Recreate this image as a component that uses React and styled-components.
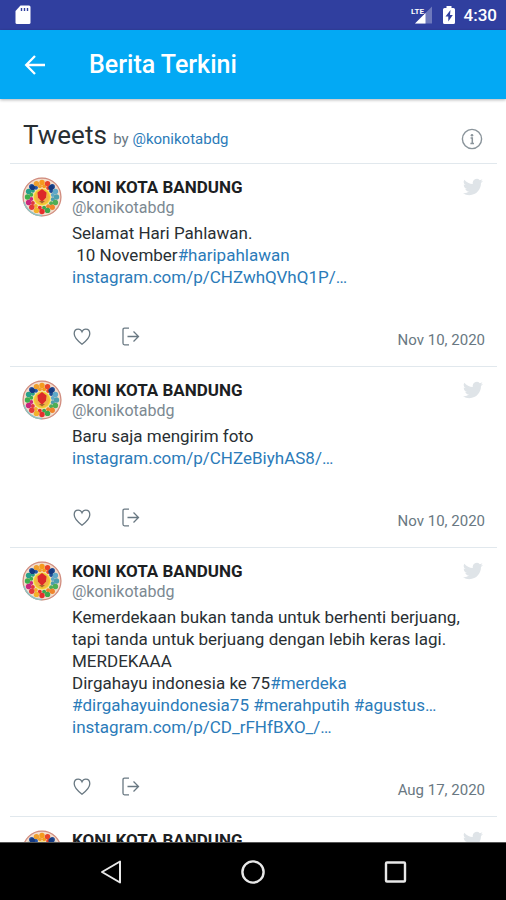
import React from 'react';
import styled, { createGlobalStyle } from 'styled-components';

const GlobalStyle = createGlobalStyle`
  * {
    box-sizing: border-box;
  }

  body {
    margin: 0;
    background: #fff;
    font-family: Roboto, "Liberation Sans", sans-serif;
  }
`;

const Screen = styled.div`
  display: flex;
  flex-direction: column;
  height: 100vh;
  overflow: hidden;
`;

const StatusBar = styled.div`
  flex: none;
  display: flex;
  align-items: center;
  justify-content: space-between;
  height: 30px;
  padding: 0 9px 0 15px;
  background: #303f9f;
  color: #fff;
`;

const StatusIcons = styled.div`
  display: flex;
  align-items: center;
  gap: 9px;
`;

const Clock = styled.time`
  font-size: 17px;
  font-weight: 500;
  line-height: 20px;
`;

const AppBar = styled.header`
  flex: none;
  display: flex;
  align-items: center;
  gap: 42px;
  height: 69px;
  padding: 0 23px;
  background: #03a9f4;
  color: #fff;
  box-shadow: 0 1px 3px rgba(0, 0, 0, 0.3);
  z-index: 1;
`;

const AppTitle = styled.h1`
  margin: 0;
  font-size: 25px;
  font-weight: 500;
  line-height: 30px;
`;

const IconButton = styled.button`
  display: flex;
  padding: 0;
  border: none;
  background: none;
  color: inherit;
  cursor: pointer;
`;

const Feed = styled.main`
  flex: 1;
  min-height: 0;
  padding: 0 9px 0 10px;
  overflow: hidden auto;
  scrollbar-width: none;
`;

const FeedHeader = styled.div`
  display: flex;
  align-items: center;
  justify-content: space-between;
  height: 65px;
  padding: 15px 14px 0 13px;
  border-bottom: 1px solid #e1e8ed;
  color: #8a949b;
`;

const FeedTitle = styled.h2`
  margin: 0;
  padding-bottom: 4px;
  font-size: 26px;
  font-weight: 400;
  line-height: 30px;
  color: #292f33;
`;

const Byline = styled.span`
  font-size: 15px;
  color: #697882;
`;

const Link = styled.a`
  color: #2b7bb9;
  text-decoration: none;
`;

const TweetRow = styled.article`
  display: flex;
  gap: 10px;
  padding: 13px 12px 17px 12px;
  border-bottom: 1px solid #e1e8ed;
`;

const TweetMain = styled.div`
  flex: 1;
  min-width: 0;
`;

const TweetTop = styled.div`
  display: flex;
  align-items: flex-start;
  justify-content: space-between;
  padding-right: 2px;
  color: #dfe4e8;
`;

const Name = styled.div`
  font-size: 17px;
  font-weight: 700;
  line-height: 20px;
  color: #1c2022;
`;

const Handle = styled.div`
  font-size: 16px;
  line-height: 22px;
  color: #7c8992;
`;

const TweetText = styled.div`
  margin-top: 3px;
  font-size: 17px;
  line-height: 22px;
  color: #292f33;
`;

const TextLine = styled.div`
  white-space: pre-wrap;
`;

const TweetFooter = styled.div`
  display: flex;
  align-items: flex-start;
  justify-content: space-between;
  margin-top: 38px;
  color: #697882;
`;

const Actions = styled.div`
  display: flex;
  gap: 29px;
`;

const TweetDate = styled.time`
  padding-top: 5px;
  font-size: 15px;
  line-height: 18px;
`;

const NavBar = styled.nav`
  flex: none;
  display: flex;
  align-items: center;
  justify-content: center;
  gap: 114px;
  height: 58px;
  background: #000;
  border-top: 1px solid #555;
  color: #e8e8e8;
`;

const SdCardIcon = () => (
  <svg width="16" height="20" viewBox="0 0 16 20" aria-hidden="true">
    <path d="M5.5 0.5H14Q15.5 0.5 15.5 2V17.5Q15.5 19 14 19H2Q0.5 19 0.5 17.5V6Z" fill="#fff" />
    <path d="M6.5 3v3M9.5 3v3M12.5 3v3" stroke="#303f9f" strokeWidth="1.4" />
  </svg>
);

const SignalIcon = () => (
  <svg width="24" height="20" viewBox="0 0 24 20" aria-hidden="true">
    <path d="M5 18.5 22 1.5V18.5Z" fill="#fff" opacity="0.3" />
    <path d="M5 18.5 15.5 8V18.5Z" fill="#fff" />
    <rect width="14" height="10" fill="#303f9f" />
    <text x="1" y="9" fill="#fff" fontSize="8" fontWeight="700">LTE</text>
  </svg>
);

const BatteryIcon = () => (
  <svg width="12" height="20" viewBox="0 0 12 20" aria-hidden="true">
    <path d="M3.5 1H8.5V3H10.5Q12 3 12 4.5V17.5Q12 19 10.5 19H1.5Q0 19 0 17.5V4.5Q0 3 1.5 3H3.5Z" fill="#fff" />
    <path d="M7.5 5 2.5 11.500H5.3V16.500L9.8 10H7Z" fill="#303f9f" />
  </svg>
);

const BackArrowIcon = () => (
  <svg width="24" height="24" viewBox="0 0 24 24" fill="none" stroke="currentColor" strokeWidth="2.3" aria-hidden="true">
    <path d="M22 12H4M12 3 3.2 12 12 21" />
  </svg>
);

const InfoIcon = () => (
  <svg width="22" height="22" viewBox="0 0 22 22" fill="none" stroke="currentColor" aria-hidden="true">
    <circle cx="11" cy="11" r="9.6" strokeWidth="1.4" />
    <circle cx="11" cy="7.2" r="1.3" fill="currentColor" stroke="none" />
    <path d="M9.6 10H11.3V15.5M9.4 15.5H13" strokeWidth="1.5" />
  </svg>
);

const BirdIcon = () => (
  <svg width="20" height="20" viewBox="0 0 24 24" fill="currentColor" aria-hidden="true">
    <path d="M23.950 4.570a10 10 0 0 1-2.820.770 4.960 4.960 0 0 0 2.160-2.720c-.950.550-2 .950-3.130 1.180a4.920 4.920 0 0 0-8.380 4.480C7.690 8.090 4.070 6.130 1.640 3.160a4.930 4.930 0 0 0 1.520 6.570 4.900 4.900 0 0 1-2.230-.610v.060a4.920 4.920 0 0 0 3.950 4.830 5 5 0 0 1-2.210.080 4.940 4.940 0 0 0 4.600 3.420A9.870 9.870 0 0 1 0 19.540a13.990 13.990 0 0 0 7.550 2.210c9.050 0 14-7.500 14-13.980 0-.210 0-.420-.020-.630a9.940 9.940 0 0 0 2.460-2.550z" />
  </svg>
);

const HeartIcon = () => (
  <svg width="20" height="20" viewBox="0 0 20 20" fill="none" stroke="currentColor" strokeWidth="1.3" aria-hidden="true">
    <path d="M10 18.2C6.5 15.5 2.200 12 2.200 7.700 2.200 5 4 3.200 6.200 3.200 8 3.200 9.300 4.200 10 5.800 10.700 4.200 12 3.200 13.800 3.200 16 3.200 17.800 5 17.800 7.700 17.800 12 13.500 15.500 10 18.200Z" />
  </svg>
);

const ShareIcon = () => (
  <svg width="20" height="20" viewBox="0 0 20 20" fill="none" stroke="currentColor" strokeWidth="1.3" aria-hidden="true">
    <path d="M8 2.200H3.500Q2 2.200 2 3.700V17.300Q2 18.800 3.500 18.800H8M6.500 10.500H17.500M12.500 5.500 17.500 10.500 12.500 15.500" />
  </svg>
);

const beads = [
  '#f59a1d', '#e8432a', '#1d4a93', '#5fa8c8', '#4c9fae', '#4fae55',
  '#f0842a', '#3fa64c', '#e62e2b', '#f3b22b', '#e23a3a', '#c9277c',
  '#3fae4c', '#27a08a', '#2456a8', '#f0a02e',
];

const Avatar = () => (
  <svg width="40" height="40" viewBox="0 0 40 40" role="img" aria-label="KONI KOTA BANDUNG">
    <circle cx="20" cy="20" r="19.5" fill="#f3dccb" />
    <circle cx="20" cy="20" r="18.9" fill="none" stroke="#d08c80" strokeWidth="1.2" />
    <path d="M2 25A18.500 18.500 0 0 0 20 38.500" fill="none" stroke="#8fc4c4" strokeWidth="1.500" />
    {beads.map((color, i) => {
      const angle = (i / beads.length) * Math.PI * 2 - Math.PI / 2;
      return (
        <g key={i} fill={color}>
          <circle cx={20 + Math.cos(angle) * 14.5} cy={20 + Math.sin(angle) * 14.5} r="2.7" />
          <circle cx={20 + Math.cos(angle + 0.2) * 11} cy={20 + Math.sin(angle + 0.2) * 11} r="2" />
        </g>
      );
    })}
    <circle cx="10.500" cy="10.500" r="2.600" fill="#153a80" />
    <circle cx="29" cy="10.500" r="2.600" fill="#153a80" />
    <circle cx="20" cy="20" r="9" fill="#f7e27a" />
    <circle cx="20" cy="20" r="7.400" fill="#f2b24a" stroke="#f0cb2c" strokeWidth="1.400" />
    <path d="M20 12 24.500 15.500 24 20.500 20 25 16 20.500 15.500 15.500Z" fill="#dc2929" />
    <path d="M17 24h6l-3 2.500z" fill="#a8682a" />
  </svg>
);

const tweets = [
  {
    date: 'Nov 10, 2020',
    lines: [
      [{ text: 'Selamat Hari Pahlawan.' }],
      [{ text: ' 10 November' }, { text: '#haripahlawan', link: true }],
      [{ text: 'instagram.com/p/CHZwhQVhQ1P/…', link: true }],
    ],
  },
  {
    date: 'Nov 10, 2020',
    lines: [
      [{ text: 'Baru saja mengirim foto' }],
      [{ text: 'instagram.com/p/CHZeBiyhAS8/…', link: true }],
    ],
  },
  {
    date: 'Aug 17, 2020',
    lines: [
      [{ text: 'Kemerdekaan bukan tanda untuk berhenti berjuang, tapi tanda untuk berjuang dengan lebih keras lagi.' }],
      [{ text: 'MERDEKAAA' }],
      [{ text: 'Dirgahayu indonesia ke 75' }, { text: '#merdeka', link: true }],
      [
        { text: '#dirgahayuindonesia75', link: true },
        { text: ' ' },
        { text: '#merahputih', link: true },
        { text: ' ' },
        { text: '#agustus…', link: true },
      ],
      [{ text: 'instagram.com/p/CD_rFHfBXO_/…', link: true }],
    ],
  },
  { lines: [] },
];

const Tweet = ({ date, lines }) => (
  <TweetRow>
    <Avatar />
    <TweetMain>
      <TweetTop>
        <div>
          <Name>KONI KOTA BANDUNG</Name>
          <Handle>@konikotabdg</Handle>
        </div>
        <BirdIcon />
      </TweetTop>
      {lines.length > 0 && (
        <>
          <TweetText>
            {lines.map((parts, index) => (
              <TextLine key={index}>
                {parts.map((part, i) =>
                  part.link ? <Link key={i} href="#">{part.text}</Link> : part.text
                )}
              </TextLine>
            ))}
          </TweetText>
          <TweetFooter>
            <Actions>
              <IconButton type="button" aria-label="Like"><HeartIcon /></IconButton>
              <IconButton type="button" aria-label="Share"><ShareIcon /></IconButton>
            </Actions>
            <TweetDate>{date}</TweetDate>
          </TweetFooter>
        </>
      )}
    </TweetMain>
  </TweetRow>
);

const App = () => (
  <Screen>
    <GlobalStyle />
    <StatusBar>
      <SdCardIcon />
      <StatusIcons>
        <SignalIcon />
        <BatteryIcon />
        <Clock>4:30</Clock>
      </StatusIcons>
    </StatusBar>
    <AppBar>
      <IconButton type="button" aria-label="Back"><BackArrowIcon /></IconButton>
      <AppTitle>Berita Terkini</AppTitle>
    </AppBar>
    <Feed>
      <FeedHeader>
        <FeedTitle>
          Tweets <Byline>by <Link href="#">@konikotabdg</Link></Byline>
        </FeedTitle>
        <IconButton type="button" aria-label="Info"><InfoIcon /></IconButton>
      </FeedHeader>
      {tweets.map((tweet, index) => (
        <Tweet key={index} {...tweet} />
      ))}
    </Feed>
    <NavBar>
      <IconButton type="button" aria-label="Back">
        <svg width="28" height="28" viewBox="0 0 28 28" fill="none" stroke="currentColor" strokeWidth="2" strokeLinejoin="round">
          <path d="M23 3.500V24.500L5 14Z" />
        </svg>
      </IconButton>
      <IconButton type="button" aria-label="Home">
        <svg width="28" height="28" viewBox="0 0 28 28" fill="none" stroke="currentColor" strokeWidth="2.4">
          <circle cx="14" cy="14" r="10.6" />
        </svg>
      </IconButton>
      <IconButton type="button" aria-label="Recents">
        <svg width="28" height="28" viewBox="0 0 28 28" fill="none" stroke="currentColor" strokeWidth="2.4">
          <rect x="5" y="4.500" width="19" height="19" rx="1" />
        </svg>
      </IconButton>
    </NavBar>
  </Screen>
);

export default App;
